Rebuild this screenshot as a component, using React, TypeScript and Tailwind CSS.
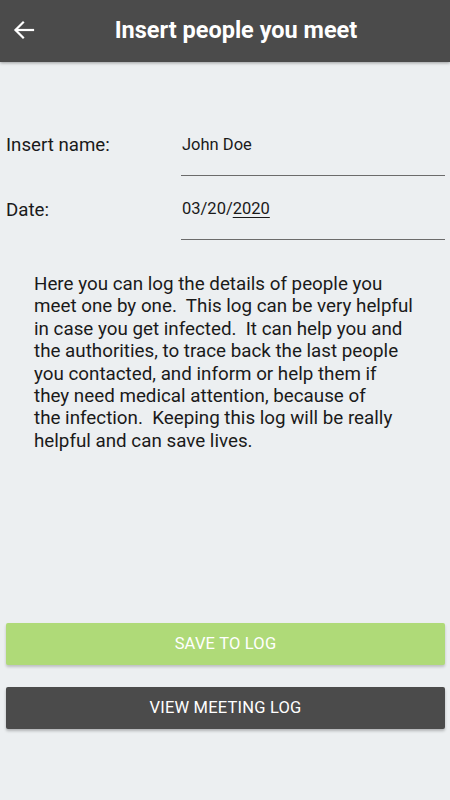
import React from "react";

export default function App() {
  const lines = [
    "Here you can log the details of people you",
    "meet one by one.  This log can be very helpful",
    "in case you get infected.  It can help you and",
    "the authorities, to trace back the last people",
    "you contacted, and inform or help them if",
    "they need medical attention, because of",
    "the infection.  Keeping this log will be really",
    "helpful and can save lives.",
  ];
  return (
    <div className="w-[450px] h-[800px] bg-[#eceff1] flex flex-col" style={{ fontFamily: "Roboto, 'Noto Sans', sans-serif" }}>
      <div className="h-[62px] shrink-0 bg-[#4b4b4b] flex items-center relative shadow-[0_1px_3px_rgba(0,0,0,0.35)] z-10">
        <div className="absolute left-[13px] top-[20px]">
          <svg width="22" height="20" viewBox="0 0 22 20" fill="none" stroke="white" strokeWidth="2.2" strokeLinecap="square">
            <path d="M20 10H3" />
            <path d="M10 2.5L2.5 10L10 17.5" />
          </svg>
        </div>
        <div className="flex-1 text-center text-white font-bold text-[23.5px] pl-[22px]">Insert people you meet</div>
      </div>

      <div className="flex flex-col pt-[66px]">
        <div className="flex items-start h-[48px]">
          <div className="w-[181px] pl-[6px] text-[18.7px] text-[#1a1a1a] leading-[24px] pt-[5px]">Insert name:</div>
          <div className="flex-1 mr-[5px] border-b border-[#6b6b6b] h-[48px] pt-[7px] text-[16.5px] text-[#1a1a1a] leading-[20px] pl-[1px]">John Doe</div>
        </div>
        <div className="flex items-start h-[64px]">
          <div className="w-[181px] pl-[6px] text-[18.7px] text-[#1a1a1a] leading-[24px] pt-[22px]">Date:</div>
          <div className="flex-1 mr-[5px] border-b border-[#6b6b6b] h-[64px] pt-[23px] text-[16.5px] text-[#1a1a1a] leading-[20px] pl-[1px]">
            03/20/<span className="underline underline-offset-[3px]">2020</span>
          </div>
        </div>

        <div className="pl-[34px] pt-[33px] text-[18.8px] leading-[22.4px] text-[#1a1a1a]">
          {lines.map((l, i) => (
            <div key={i} className="whitespace-pre">{l}</div>
          ))}
        </div>
      </div>

      <div className="flex flex-col pl-[6px] pr-[5px] gap-[22px] mt-[171px]">
        <button className="h-[42px] bg-[#afda78] rounded-[2px] shadow-[0_2px_3px_rgba(0,0,0,0.2)] text-white text-[16.5px] tracking-[0.2px] uppercase">
          SAVE TO LOG
        </button>
        <button className="h-[42px] bg-[#4b4b4b] rounded-[2px] shadow-[0_2px_3px_rgba(0,0,0,0.25)] text-white text-[16.5px] tracking-[0.2px] uppercase">
          VIEW MEETING LOG
        </button>
      </div>
    </div>
  );
}
